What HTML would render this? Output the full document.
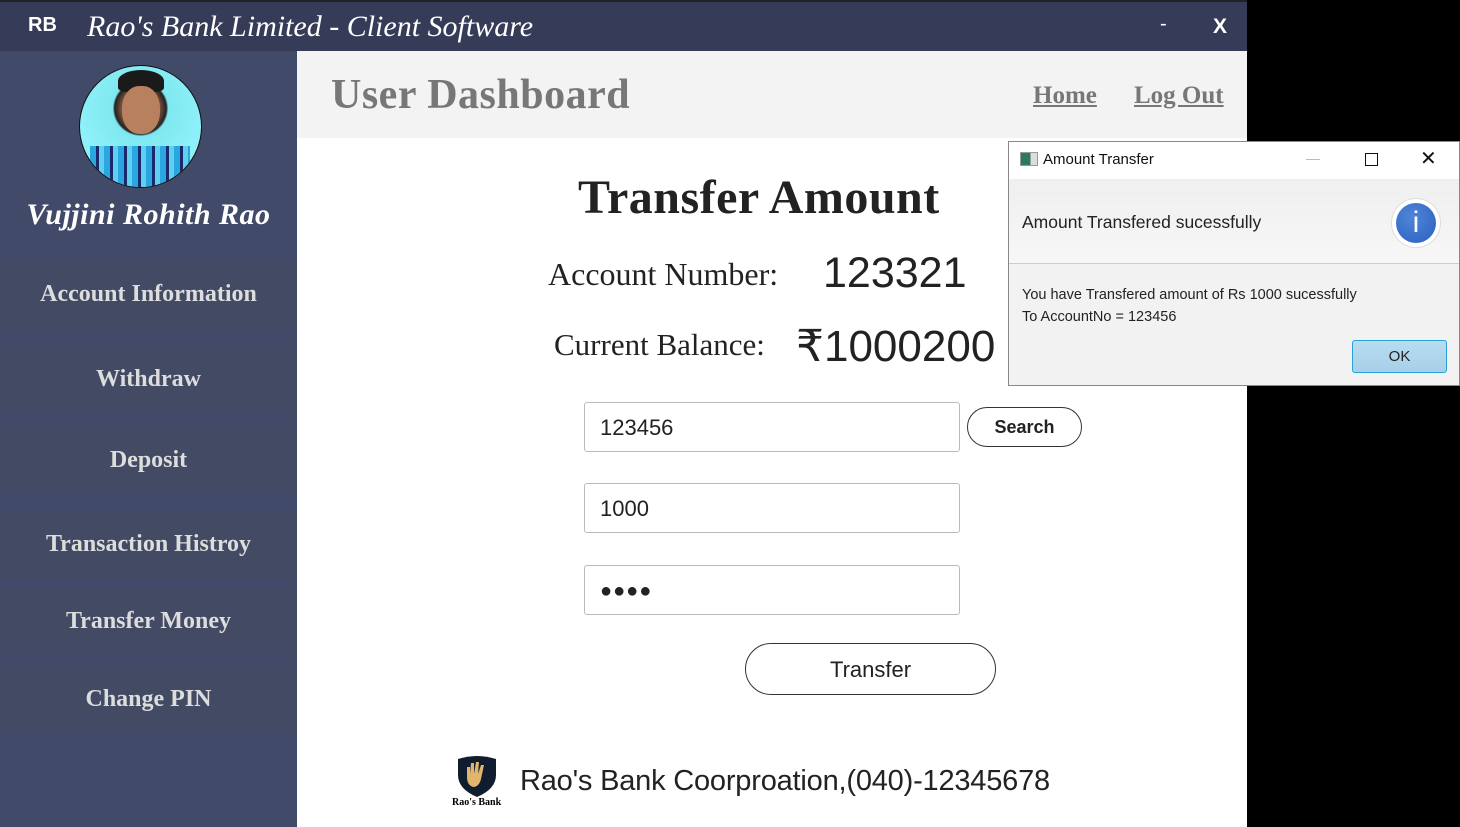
<!DOCTYPE html>
<html><head><meta charset="utf-8"><style>
*{margin:0;padding:0;box-sizing:border-box}
body{width:1460px;height:827px;background:#000;position:relative;overflow:hidden;font-family:"Liberation Sans",sans-serif}
.abs{position:absolute}
.serif{font-family:"Liberation Serif",serif}
#top{left:0;top:0;width:1247px;height:51px;background:#363c58;border-top:2px solid #222}
#side{left:0;top:51px;width:297px;height:776px;background:#424a6a}
.item{position:absolute;left:0;width:297px;background:#424b63;color:#ddd;font-family:"Liberation Serif",serif;font-weight:bold;font-size:24px;text-align:center}
#main{left:297px;top:51px;width:950px;height:776px;background:#fff}
#hdr{left:297px;top:51px;width:950px;height:87px;background:#f3f3f3}
.inp{position:absolute;left:584px;width:376px;height:50px;border:1px solid #bbb;border-radius:3px;background:#fff;font-size:22px;padding:12px 15px;color:#222}
</style></head><body>
<div id="top" class="abs">
 <div class="abs" style="left:28px;top:12px;color:#fff;font-weight:bold;font-size:20px">RB</div>
 <div class="abs serif" style="left:87px;top:8px;color:#fff;font-style:italic;font-size:30px">Rao's Bank Limited - Client Software</div>
 <div class="abs" style="left:1160px;top:11px;color:#fff;font-size:20px">-</div>
 <div class="abs" style="left:1213px;top:13px;color:#fff;font-weight:bold;font-size:21px">X</div>
</div>
<div id="side" class="abs">
 <div class="abs" style="left:79px;top:14px;width:123px;height:123px;border-radius:50%;border:1px solid #111;background:radial-gradient(circle at 50% 35%,#c08060 0,#8a5a40 18%,#222 26%,#7ee8f0 28%,#8ef0f8 60%);overflow:hidden">
  <div style="position:absolute;left:10px;top:80px;width:100px;height:50px;background:repeating-linear-gradient(90deg,#2aa6e0 0 6px,#1a2a6a 6px 9px,#5fd0f0 9px 14px)"></div>
  <div style="position:absolute;left:38px;top:4px;width:46px;height:22px;border-radius:50% 50% 20% 20%;background:#1a1a1a"></div>
  <div style="position:absolute;left:42px;top:20px;width:38px;height:48px;border-radius:45%;background:#b98060"></div>
 </div>
 <div class="abs serif" style="left:0;width:297px;top:147px;text-align:center;color:#fff;font-style:italic;font-weight:bold;font-size:30px;letter-spacing:0.5px">Vujjini Rohith Rao</div>
 <div class="item" style="top:211px;height:68px;line-height:64px">Account Information</div>
 <div class="item" style="top:296px;height:64px;line-height:64px">Withdraw</div>
 <div class="item" style="top:377px;height:64px;line-height:64px">Deposit</div>
 <div class="item" style="top:461px;height:65px;line-height:64px">Transaction Histroy</div>
 <div class="item" style="top:539px;height:63px;line-height:62px">Transfer Money</div>
 <div class="item" style="top:617px;height:63px;line-height:62px">Change PIN</div>
</div>
<div id="main" class="abs"></div>
<div id="hdr" class="abs">
 <div class="abs serif" style="left:34px;top:20px;font-size:42px;font-weight:bold;color:#777;letter-spacing:0.5px">User Dashboard</div>
 <div class="abs serif" style="left:736px;top:31px;font-size:25px;font-weight:bold;color:#777;text-decoration:underline">Home</div>
 <div class="abs serif" style="left:837px;top:31px;font-size:25px;font-weight:bold;color:#777;text-decoration:underline">Log Out</div>
</div>
<div class="abs serif" style="left:578px;top:170px;font-size:48px;font-weight:bold;color:#222;letter-spacing:0.5px">Transfer Amount</div>
<div class="abs serif" style="left:548px;top:256px;font-size:32px;color:#222">Account Number:</div>
<div class="abs" style="left:823px;top:249px;font-size:43px;color:#222">123321</div>
<div class="abs serif" style="left:554px;top:327px;font-size:31px;color:#222">Current Balance:</div>
<div class="abs" style="left:796px;top:321px;font-size:44px;color:#222">₹1000200</div>
<div class="inp" style="top:402px">123456</div>
<div class="abs" style="left:967px;top:407px;width:115px;height:40px;border:1.5px solid #333;border-radius:20px;text-align:center;line-height:38px;font-size:18px;font-weight:bold;color:#222">Search</div>
<div class="inp" style="top:483px">1000</div>
<div class="inp" style="top:565px;font-size:20px;letter-spacing:1px;padding-top:14px">●●●●</div>
<div class="abs" style="left:745px;top:643px;width:251px;height:52px;border:1.5px solid #333;border-radius:26px;text-align:center;line-height:52px;font-size:22px;color:#222">Transfer</div>
<svg class="abs" style="left:455px;top:755px" width="44" height="42" viewBox="0 0 44 42">
 <path d="M3 4 Q22 -2 41 4 L41 20 Q41 34 22 42 Q3 34 3 20 Z" fill="#0f1d2e"/>
 <path d="M12 22 L12 12 L15 12 L15 19 L16 8 L19 8 L19 19 L21 7 L24 7 L23 19 L26 10 L29 10 L26 24 Q24 32 18 32 Q12 30 12 22Z" fill="#e1b56c"/>
</svg>
<div class="abs serif" style="left:452px;top:797px;font-size:10px;font-weight:bold;color:#000">Rao's Bank</div>
<div class="abs" style="left:520px;top:765px;font-size:29px;color:#222;letter-spacing:-0.2px">Rao's Bank Coorproation,(040)-12345678</div>
<!-- dialog -->
<div class="abs" style="left:1008px;top:141px;width:452px;height:245px;background:#f2f2f2;border:1px solid #888">
 <div class="abs" style="left:0;top:0;width:450px;height:37px;background:#fff"></div>
 <div class="abs" style="left:11px;top:10px;width:18px;height:14px;border:1px solid #999;background:linear-gradient(90deg,#2d7a5a 0 60%,#ddd 60%)"></div>
 <div class="abs" style="left:34px;top:9px;font-size:15px;color:#111">Amount Transfer</div>
 <div class="abs" style="left:297px;top:17px;width:14px;height:1px;background:#bbb"></div>
 <div class="abs" style="left:356px;top:11px;width:13px;height:13px;border:1px solid #111"></div>
 <div class="abs" style="left:411px;top:4px;font-size:20px;color:#111">✕</div>
 <div class="abs" style="left:0;top:37px;width:450px;height:85px;background:linear-gradient(#efefef,#f7f7f7);border-bottom:1px solid #ccc"></div>
 <div class="abs" style="left:13px;top:70px;font-size:17.5px;color:#222">Amount Transfered sucessfully</div>
 <div class="abs" style="left:382px;top:56px;width:50px;height:50px;border-radius:50%;background:#fff;border:1px solid #ddd"></div>
 <div class="abs" style="left:387px;top:61px;width:40px;height:40px;border-radius:50%;background:radial-gradient(circle at 40% 35%,#4f86d8,#2b5fc0);color:#fff;text-align:center;font-size:30px;line-height:40px">i</div>
 <div class="abs" style="left:13px;top:142px;font-size:14.5px;color:#222;line-height:22px">You have Transfered amount of Rs 1000 sucessfully<br>To AccountNo = 123456</div>
 <div class="abs" style="left:343px;top:198px;width:95px;height:33px;border:1px solid #2aa0d8;border-radius:3px;background:linear-gradient(#b8dcf0,#a6d0e8);text-align:center;line-height:31px;font-size:15px;color:#222">OK</div>
</div>
</body></html>
